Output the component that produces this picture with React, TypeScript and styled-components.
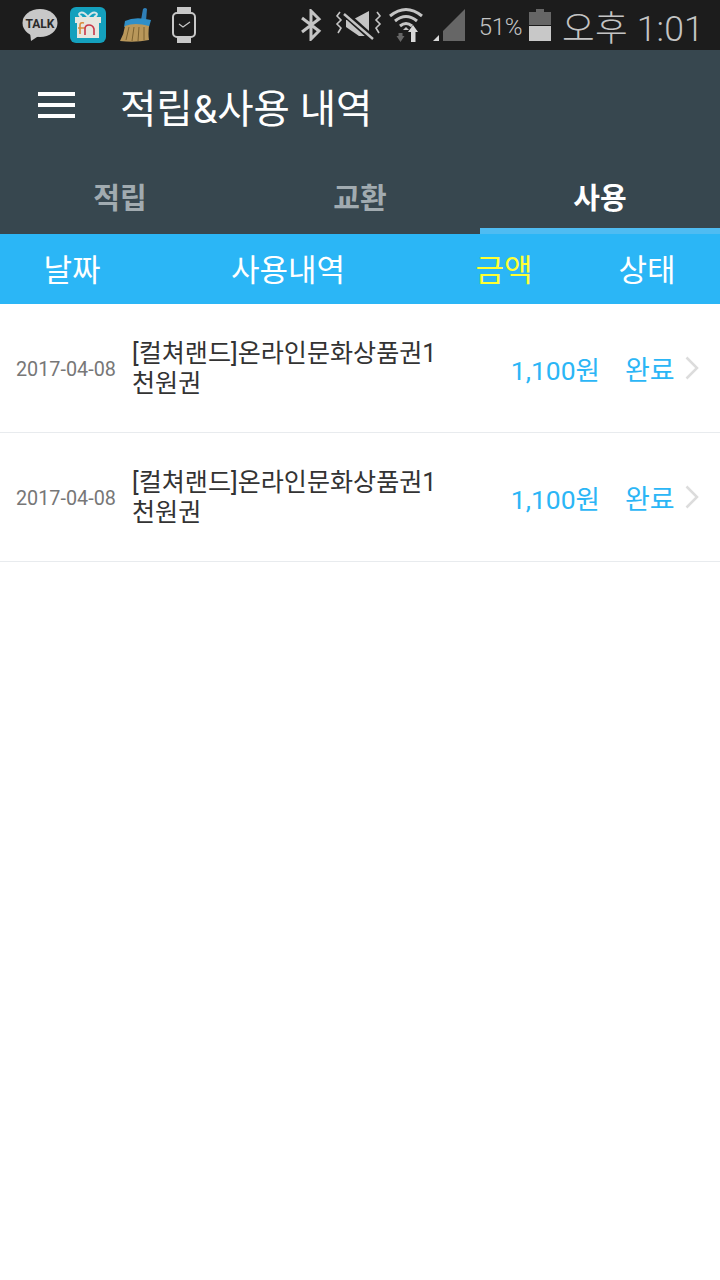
import * as React from "react";
import styled, { createGlobalStyle } from "styled-components";

const GlobalStyle = createGlobalStyle`
  html, body {
    margin: 0;
    padding: 0;
    background: #fff;
  }
  * {
    box-sizing: border-box;
  }
`;

const FONT = `Roboto, "Noto Sans CJK KR", sans-serif`;

const Page = styled.div`
  width: 720px;
  min-height: 1280px;
  background: #fff;
  font-family: ${FONT};
  overflow: hidden;
`;

const StatusBar = styled.div`
  height: 50px;
  background: #1c1c1c;
  display: flex;
  align-items: center;
  justify-content: space-between;
  padding: 0 16px 0 22px;
  color: #c4c4c4;
`;

const StatusGroup = styled.div`
  display: flex;
  align-items: center;
`;

const Battery = styled.span`
  font-size: 24px;
  font-weight: 300;
  letter-spacing: -0.3px;
  margin: 3px 7px 0 14px;
`;

const Clock = styled.span`
  font-size: 35.5px;
  font-weight: 300;
  margin-left: 11px;
  white-space: nowrap;
  letter-spacing: 0.2px;
`;

const AppBar = styled.div`
  height: 110px;
  background: #37474f;
  display: flex;
  align-items: center;
  padding: 0 0 0 38px;
  color: #fff;
`;

const Burger = styled.div`
  width: 37px;
  height: 26px;
  display: flex;
  flex-direction: column;
  justify-content: space-between;
  margin-right: 45px;
  span {
    display: block;
    height: 4px;
    background: #fff;
  }
`;

const Title = styled.h1`
  margin: 9px 0 0;
  font-size: 39.5px;
  font-weight: 400;
  line-height: 1;
`;

const Tabs = styled.div`
  height: 74px;
  background: #37474f;
  display: grid;
  grid-template-columns: repeat(3, 1fr);
`;

const Tab = styled.div<{ $active?: boolean }>`
  display: flex;
  align-items: center;
  justify-content: center;
  padding-top: 4px;
  font-size: 29px;
  font-weight: 700;
  color: ${(p) => (p.$active ? "#fff" : "#a1abb0")};
  border-bottom: 6px solid ${(p) => (p.$active ? "#4fbcf2" : "transparent")};
`;

const TableHead = styled.div`
  height: 70px;
  background: #2bb6f6;
  display: grid;
  grid-template-columns: 144px 288px 144px 142px;
`;

const HeadCell = styled.div<{ $highlight?: boolean }>`
  display: flex;
  align-items: center;
  justify-content: center;
  padding-bottom: 4px;
  font-size: 31px;
  color: ${(p) => (p.$highlight ? "#ffff33" : "#fff")};
`;

const Row = styled.div`
  height: 129px;
  display: flex;
  align-items: center;
  padding-left: 16px;
  border-bottom: 1px solid #e8ebee;
`;

const DateText = styled.div`
  width: 116px;
  flex: none;
  padding-top: 2px;
  font-size: 19.8px;
  color: #777;
  white-space: nowrap;
`;

const ItemName = styled.div`
  width: 308px;
  flex: none;
  padding-top: 2px;
  font-size: 25.1px;
  line-height: 30px;
  color: #333;
  word-break: break-all;
`;

const Amount = styled.div`
  width: 160px;
  flex: none;
  text-align: right;
  font-size: 26.5px;
  color: #2bb6f6;
  white-space: nowrap;
`;

const Status = styled.div`
  margin-left: 25px;
  font-size: 27px;
  color: #2bb6f6;
  white-space: nowrap;
`;

const Chevron = styled.svg`
  margin-left: 10px;
  flex: none;
`;

const rows = [
  { date: "2017-04-08", name: "[컬쳐랜드]온라인문화상품권1천원권", amount: "1,100원", status: "완료" },
  { date: "2017-04-08", name: "[컬쳐랜드]온라인문화상품권1천원권", amount: "1,100원", status: "완료" },
];

function TalkIcon() {
  return (
    <svg width="36" height="34" viewBox="0 0 36 34" style={{ marginRight: 12 }}>
      <ellipse cx="18" cy="15" rx="17.5" ry="14" fill="#c8c8c8" />
      <path d="M8 24 L9 33 L18 27 Z" fill="#c8c8c8" />
      <text x="18" y="19.5" textAnchor="middle" fontSize="12" fontWeight="700" fontFamily="Roboto, sans-serif" fill="#2a2a2a">
        TALK
      </text>
    </svg>
  );
}

function GiftIcon() {
  return (
    <svg width="36" height="36" viewBox="0 0 36 36" style={{ marginRight: 14 }}>
      <rect width="36" height="36" rx="6" fill="#14a0bd" />
      <path d="M18 10 C12 2 5 7 12 10 M18 10 C24 2 31 7 24 10" fill="none" stroke="#d7e6e8" strokeWidth="2" />
      <rect x="5" y="10" width="26" height="6" fill="#e8e6df" />
      <rect x="7" y="16" width="22" height="15" fill="#e8e6df" />
      <path d="M10 27 V18 Q10 15 14 16 M8 21 H15" fill="none" stroke="#d98a3c" strokeWidth="1.6" />
      <path d="M15 28 V22 Q15 18 19 18 T24 22 V28" fill="none" stroke="#c8384a" strokeWidth="1.6" />
    </svg>
  );
}

function BroomIcon() {
  return (
    <svg width="32" height="34" viewBox="0 0 32 34" style={{ marginRight: 20 }}>
      <path d="M21 12 L23 1 Q25 -1 27 1 L26 13 Z" fill="#2f7fb8" />
      <path d="M5 13 Q15 8 31 12 L29 19 Q15 15 4 19 Z" fill="#2f8fc8" />
      <path d="M5 18 Q15 14 29 18 Q28 27 29 32 Q15 35 0 33 Q4 26 5 18 Z" fill="#b9975a" />
      <path d="M9 19 L6 32 M14 19 L12 33 M19 19 L18 33 M24 19 L24 32" stroke="#7d6230" strokeWidth="1" fill="none" />
    </svg>
  );
}

function WatchIcon() {
  return (
    <svg width="24" height="36" viewBox="0 0 24 36">
      <path d="M5 0 H19 V6 H5 Z M5 30 H19 V36 H5 Z" fill="#c8c8c8" />
      <rect x="1" y="6" width="22" height="24" rx="4" fill="#1c1c1c" stroke="#c8c8c8" strokeWidth="2" />
      <path d="M7 17 L11 20 L18 15" fill="none" stroke="#c8c8c8" strokeWidth="1.2" />
    </svg>
  );
}

function BluetoothIcon() {
  return (
    <svg width="22" height="32" viewBox="0 0 22 32" style={{ marginRight: 13 }}>
      <path d="M2 9 L19 22 L11 30 V2 L19 10 L2 23" fill="none" stroke="#c4c4c4" strokeWidth="3" />
    </svg>
  );
}

function MuteVibrateIcon() {
  return (
    <svg width="47" height="32" viewBox="0 0 47 32" style={{ marginRight: 7 }}>
      <path d="M5 3 L2 7 L6 11 L2 15 L6 19 L3 24 M42 3 L45 7 L41 11 L45 15 L41 19 L44 24" fill="none" stroke="#c4c4c4" strokeWidth="1.6" />
      <path d="M11 11 H17 L34 2 V27 H24 L11 18 Z" fill="#c4c4c4" />
      <path d="M9 4 L38 30" stroke="#1c1c1c" strokeWidth="6.5" />
      <path d="M9 5 L38 30" stroke="#c4c4c4" strokeWidth="2.4" />
    </svg>
  );
}

function WifiIcon() {
  return (
    <svg width="34" height="36" viewBox="0 0 34 36" style={{ marginRight: 10 }}>
      <path d="M1 9 Q17 -4 33 9 M6 14 Q17 5 28 14 M11 19 Q17 14 23 19" fill="none" stroke="#c4c4c4" strokeWidth="3" />
      <path d="M14 23 L17 20 L20 23 Z" fill="#c4c4c4" />
      <path d="M12 33 L8 27 H10 V24 H14 V27 H16 Z" fill="#666" transform="translate(-0.5 2)" />
      <path d="M23 16 L28 23 H25.5 V33 H21 V23 H18 Z" fill="#d8d8d8" transform="translate(1 2)" />
    </svg>
  );
}

function SignalIcon() {
  return (
    <svg width="32" height="32" viewBox="0 0 32 32">
      <path d="M32 0 V32 H10 V22 Z" fill="#666" />
      <path d="M0 32 L6 26 V32 Z" fill="#d8d8d8" />
    </svg>
  );
}

function BatteryIcon() {
  return (
    <svg width="22" height="32" viewBox="0 0 22 32">
      <path d="M7 0 H15 V3 H22 V16 H0 V3 H7 Z" fill="#666" />
      <rect y="17" width="22" height="15" fill="#c8c8c8" />
    </svg>
  );
}

export default function App() {
  return (
    <Page>
      <GlobalStyle />
      <StatusBar>
        <StatusGroup>
          <TalkIcon />
          <GiftIcon />
          <BroomIcon />
          <WatchIcon />
        </StatusGroup>
        <StatusGroup>
          <BluetoothIcon />
          <MuteVibrateIcon />
          <WifiIcon />
          <SignalIcon />
          <Battery>51%</Battery>
          <BatteryIcon />
          <Clock>오후 1:01</Clock>
        </StatusGroup>
      </StatusBar>
      <AppBar>
        <Burger>
          <span />
          <span />
          <span />
        </Burger>
        <Title>적립&amp;사용 내역</Title>
      </AppBar>
      <Tabs>
        <Tab>적립</Tab>
        <Tab>교환</Tab>
        <Tab $active>사용</Tab>
      </Tabs>
      <TableHead>
        <HeadCell>날짜</HeadCell>
        <HeadCell>사용내역</HeadCell>
        <HeadCell $highlight>금액</HeadCell>
        <HeadCell>상태</HeadCell>
      </TableHead>
      {rows.map((row, i) => (
        <Row key={i}>
          <DateText>{row.date}</DateText>
          <ItemName>{row.name}</ItemName>
          <Amount>{row.amount}</Amount>
          <Status>{row.status}</Status>
          <Chevron width="14" height="24" viewBox="0 0 14 24">
            <path d="M1.5 1.5 L12 12 L1.5 22.5" fill="none" stroke="#dcdcdc" strokeWidth="2.5" />
          </Chevron>
        </Row>
      ))}
    </Page>
  );
}
